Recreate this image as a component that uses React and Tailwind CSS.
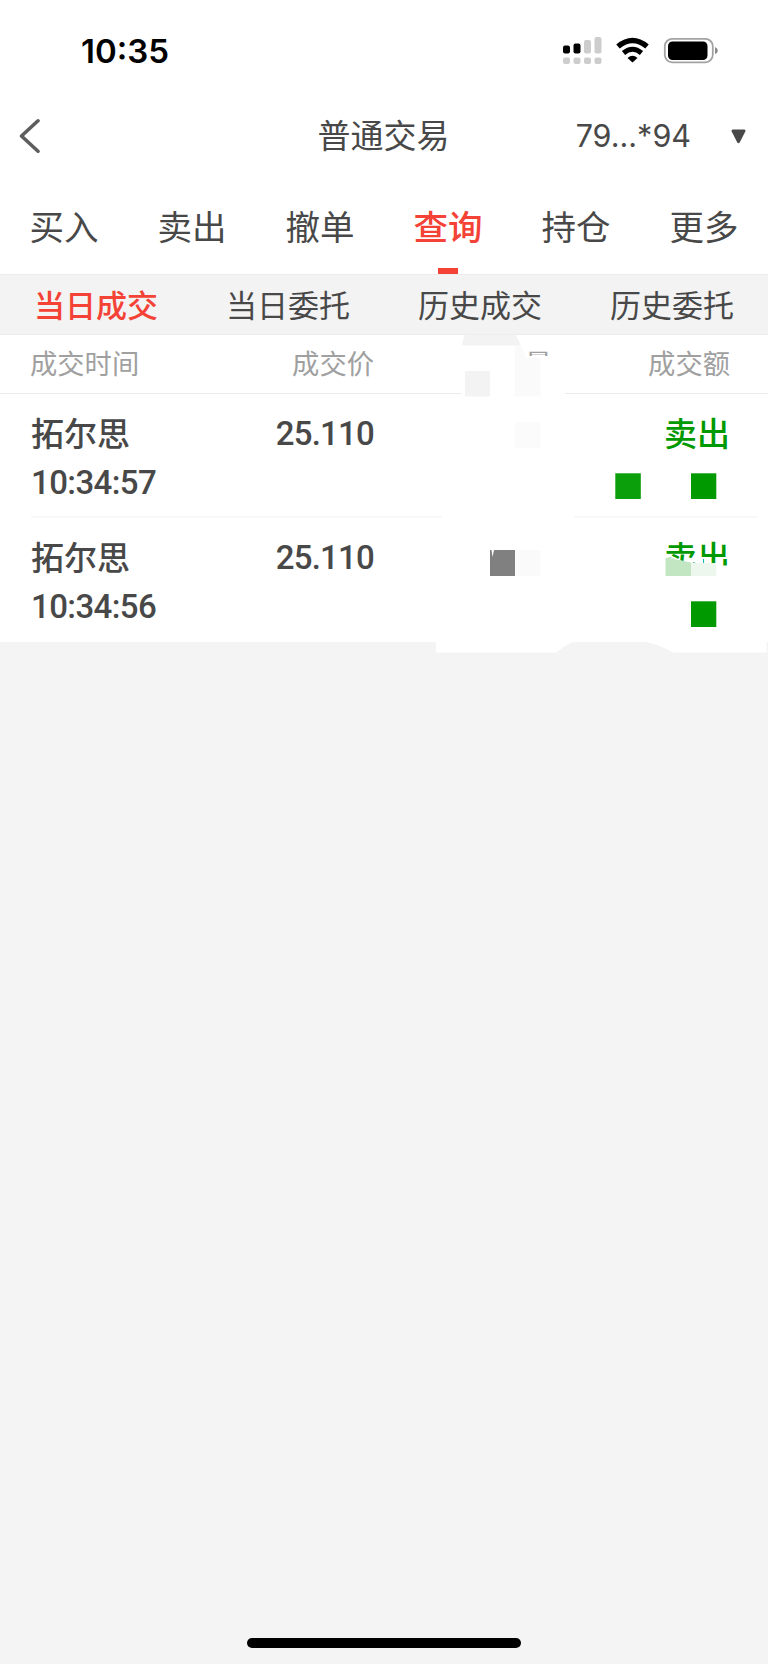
import React, { useState } from 'react';

const tabs = ['买入', '卖出', '撤单', '查询', '持仓', '更多'];
const subTabs = ['当日成交', '当日委托', '历史成交', '历史委托'];

const deals = [
  { id: 1, name: '拓尔思', time: '10:34:57', price: '25.110', side: '卖出' },
  { id: 2, name: '拓尔思', time: '10:34:56', price: '25.110', side: '卖出' },
];

const StatusBar = () => (
  <div className="flex h-[100px] items-center justify-between pl-[81px] pr-[50px]">
    <span className="pt-[2px] font-[Inter] text-[33px] leading-none font-semibold text-black">
      10:35
    </span>
    <div className="flex items-center">
      <svg width="40" height="30" viewBox="561 35 40 30">
        <rect x="562" y="45.5" width="7" height="8" rx="2" fill="#000" />
        <rect x="572.5" y="43.5" width="7" height="10" rx="2" fill="#000" />
        <rect x="583" y="40" width="7" height="13.5" rx="2" fill="#cdcdcd" />
        <rect x="593.5" y="37" width="7" height="16.5" rx="2" fill="#cdcdcd" />
        <rect x="562" y="57.5" width="7" height="6.5" rx="2" fill="#cdcdcd" />
        <rect x="572.5" y="57.5" width="7" height="6.5" rx="2" fill="#cdcdcd" />
        <rect x="583" y="57.5" width="7" height="6.5" rx="2" fill="#cdcdcd" />
        <rect x="593.5" y="57.5" width="7" height="6.5" rx="2" fill="#cdcdcd" />
      </svg>
      <svg className="ml-[13px]" width="36" height="30" viewBox="614 35 36 30" fill="none" stroke="#000">
        <path d="M617 46.5 Q631.5 34.5 646 46.5" strokeWidth="5.4" />
        <path d="M622.5 53 Q631.5 45.5 640.5 53" strokeWidth="5" />
        <path d="M626.5 58 Q631.5 53.5 636.5 58 L631.5 62.5 Z" fill="#000" stroke="none" />
      </svg>
      <svg className="ml-[12px]" width="55" height="30" viewBox="662 35 55 30">
        <rect x="663.8" y="38.8" width="48" height="23.5" rx="7.5" fill="none" stroke="#a3a3a3" strokeWidth="1.8" />
        <rect x="667" y="41.5" width="39.5" height="18.5" rx="4.5" fill="#000" />
        <path d="M714 47 Q716.8 48 716.8 50.5 Q716.8 53 714 54 Z" fill="#8a8a8a" />
      </svg>
    </div>
  </div>
);

const NavBar = () => (
  <div className="grid h-[72px] grid-cols-3 items-center pl-[18px] pr-[22px]">
    <svg width="22" height="36" viewBox="0 0 22 36" fill="none" stroke="#5e5e5e" strokeWidth="3.6" strokeLinecap="round" strokeLinejoin="round">
      <path d="M20 2.8 L3.5 18 L20 33.2" />
    </svg>
    <h1 className="pb-[3px] pl-[3px] text-center text-[33px] leading-none font-normal">普通交易</h1>
    <div className="flex items-center justify-end gap-[40px]">
      <span className="font-[Inter] text-[30.5px] leading-none font-normal">79...*94</span>
      <svg width="15" height="15" viewBox="0 0 15 15" fill="#484848">
        <path d="M1.5 0.5 H13.5 Q15 0.8 14.3 2.5 L8.7 13.5 Q7.5 15 6.3 13.5 L0.7 2.5 Q0 0.8 1.5 0.5 Z" />
      </svg>
    </div>
  </div>
);

// blocked out areas over the deal list
const Mosaic = () => (
  <svg className="pointer-events-none absolute top-0 left-0" width="768" height="318" viewBox="0 335 768 318">
    <rect x="461" y="386" width="104" height="14" fill="#fff" />
    <path d="M515 345 H521 L527 360 L529 356 H532 V354.5 H545 V356 H552 V386 H515 Z" fill="#fff" />
    <path d="M465 335 H516 L521 345.5 H462 Q462 340 465 335 Z" fill="#f3f3f3" />
    <path d="M515 345 H521 L526 359 L529 357.5 H540.5 V396.5 H515 Z" fill="#fafafa" />
    <rect x="465" y="371" width="25" height="25.5" fill="#f3f3f3" />
    <rect x="515" y="422" width="25.5" height="26" fill="#fbfbfb" />
    <rect x="442" y="515" width="132" height="6" fill="#fff" />
    <rect x="615.3" y="473.3" width="25.5" height="25.7" fill="#0c9f0c" />
    <rect x="691" y="473.3" width="25.3" height="25.7" fill="#009900" />
    <path d="M490 550 H515 V576 H490 Z" fill="#808080" />
    <path d="M491.5 550 H494 L492.5 557 Z" fill="#fff" />
    <rect x="515" y="550" width="25.5" height="26" fill="#fafafa" />
    <path d="M660 557.5 H670 L683 561 H693 V562.5 H697 V559 H703 V563.5 H721 V565.5 H735 V580 H660 Z" fill="#fff" />
    <path d="M665.5 558.5 Q668 556.5 671 558.5 L691 562.5 V576 H665.5 Z" fill="#c1e6c1" />
    <rect x="691" y="563" width="25.3" height="13" fill="#edf7ed" />
    <rect x="691" y="601.3" width="25.3" height="25.7" fill="#009900" />
    <path d="M436 640 H574 L572 642.5 Q568 643.5 556 652.5 H436 Z" fill="#fff" />
    <path d="M648 640 H766.5 V652.5 H673 Q660 645 648 642.5 Z" fill="#fff" />
  </svg>
);

const App = () => {
  const [tab, setTab] = useState('查询');
  const [subTab, setSubTab] = useState('当日成交');

  return (
    <div className="flex h-[1664px] w-[768px] flex-col bg-[#f4f4f4] font-['Noto_Sans_CJK_SC',sans-serif] text-[#484848]">
      <div className="bg-white">
        <StatusBar />
        <NavBar />
        <div className="grid h-[102px] grid-cols-6">
          {tabs.map((t) => (
            <button
              key={t}
              onClick={() => setTab(t)}
              className={`flex flex-col items-center justify-between pt-[35px] text-[34.5px] leading-[36px] ${
                t === tab ? 'font-medium text-[#f44336]' : ''
              }`}
            >
              <span>{t}</span>
              {t === tab && <span className="h-[6px] w-[20px] bg-[#f44336]" />}
            </button>
          ))}
        </div>
      </div>

      <div className="grid h-[61px] grid-cols-4 border-y border-[#ededed] bg-[#f3f3f3]">
        {subTabs.map((t) => (
          <button
            key={t}
            onClick={() => setSubTab(t)}
            className={`pb-[3px] text-[31px] leading-none ${t === subTab ? 'font-medium text-[#f44336]' : ''}`}
          >
            {t}
          </button>
        ))}
      </div>

      <div className="relative bg-white">
        <div className="grid h-[59px] grid-cols-[200px_144px_178px_1fr] items-center border-b border-[#ebebeb] pr-[38px] pb-[3px] pl-[30px] text-[27.3px] leading-none text-[#a0a0a0]">
          <span>成交时间</span>
          <span className="text-right">成交价</span>
          <span className="text-right">量</span>
          <span className="text-right">成交额</span>
        </div>
        {deals.map((deal, i) => (
          <div key={deal.id} className="h-[124px] pr-[11px] pl-[31px]">
            <div
              className={`grid h-full grid-cols-[199px_144px_1fr] pt-[14px] pr-[27px] text-[33px] leading-[49px] font-medium ${
                i < deals.length - 1 ? 'border-b-2 border-[#f8f8f8]' : ''
              }`}
            >
              <div>
                <p>{deal.name}</p>
                <p className="pt-px font-[Roboto] tracking-[-0.6px]">{deal.time}</p>
              </div>
              <span className="pt-px text-right font-[Roboto] tracking-[-0.8px]">{deal.price}</span>
              <span className="text-right text-[#009900]">{deal.side}</span>
            </div>
          </div>
        ))}
        <Mosaic />
      </div>

      <div className="mt-auto mb-[16px] h-[10px] w-[274px] self-center rounded-full bg-black" />
    </div>
  );
};

export default App;
